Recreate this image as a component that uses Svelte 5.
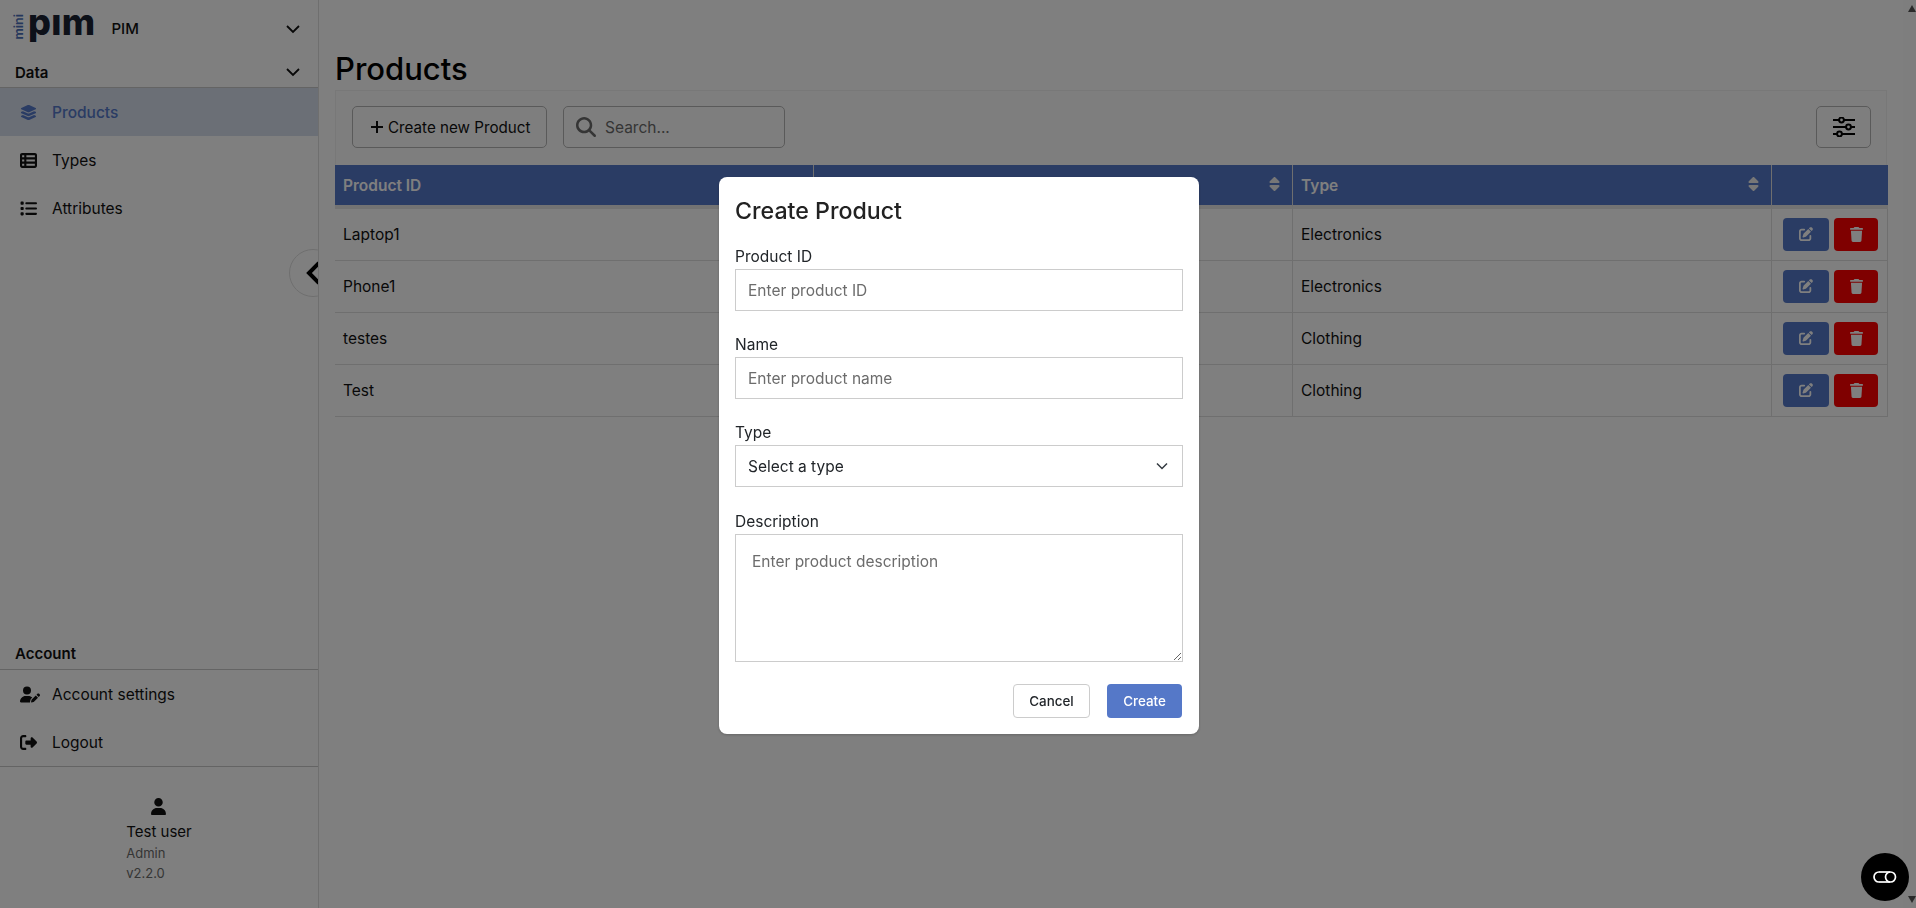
<script lang="ts">
  const products = [
    { id: 'Laptop1', name: 'Laptop', type: 'Electronics' },
    { id: 'Phone1', name: 'Phone', type: 'Electronics' },
    { id: 'testes', name: 'testes', type: 'Clothing' },
    { id: 'Test', name: 'Test', type: 'Clothing' }
  ];

  const sortIcon = 'M137.4 41.4c12.5-12.5 32.8-12.5 45.3 0l128 128c9.2 9.2 11.9 22.9 6.9 34.9s-16.6 19.8-29.6 19.8H32c-12.9 0-24.6-7.8-29.6-19.8s-2.2-25.7 6.9-34.9l128-128zm0 429.3l-128-128c-9.2-9.2-11.9-22.9-6.9-34.9s16.6-19.8 29.6-19.8H288c12.9 0 24.6 7.8 29.6 19.8s2.2 25.7-6.9 34.9l-128 128c-12.5 12.5-32.8 12.5-45.3 0z';
</script>

<div class="page">
  <aside class="sidebar">
    <div class="brand">
      <div class="logo" aria-label="mini pim">
        <span class="logo-mini">mini</span>
        <span class="logo-pim">pım</span>
      </div>
      <span class="brand-name">PIM</span>
      <svg class="chevron" width="16" height="16" viewBox="0 0 16 16" fill="none" stroke="currentColor" stroke-width="1.8"><path d="M2 5l6 6 6-6" /></svg>
    </div>

    <div class="section-title">
      <span>Data</span>
      <svg class="chevron" width="16" height="16" viewBox="0 0 16 16" fill="none" stroke="currentColor" stroke-width="1.8"><path d="M2 5l6 6 6-6" /></svg>
    </div>
    <nav>
      <div class="nav-item active">
        <svg class="nav-icon" viewBox="0 0 576 512" fill="currentColor"><path d="M264.5 5.2c14.9-6.9 32.1-6.9 47 0l218.6 101c8.5 3.9 13.9 12.4 13.9 21.8s-5.4 17.9-13.9 21.8l-218.6 101c-14.9 6.9-32.1 6.9-47 0L45.9 149.8C37.4 145.8 32 137.3 32 128s5.4-17.9 13.9-21.8L264.5 5.2zM476.9 209.6l53.2 24.6c8.5 3.9 13.9 12.4 13.9 21.8s-5.4 17.9-13.9 21.8l-218.6 101c-14.9 6.9-32.1 6.9-47 0L45.9 277.8C37.4 273.8 32 265.3 32 256s5.4-17.9 13.9-21.8l53.2-24.6 152 70.2c23.4 10.8 50.4 10.8 73.8 0l152-70.2zm-152 198.2l152-70.2 53.2 24.6c8.5 3.9 13.9 12.4 13.9 21.8s-5.4 17.9-13.9 21.8l-218.6 101c-14.9 6.9-32.1 6.9-47 0L45.9 405.8C37.4 401.8 32 393.3 32 384s5.4-17.9 13.9-21.8l53.2-24.6 152 70.2c23.4 10.8 50.4 10.8 73.8 0z" /></svg>
        <span>Products</span>
      </div>
      <div class="nav-item">
        <svg class="nav-icon" viewBox="0 0 512 512" fill="currentColor"><path d="M0 96C0 60.7 28.7 32 64 32H448c35.3 0 64 28.7 64 64V416c0 35.3-28.7 64-64 64H64c-35.3 0-64-28.7-64-64V96zm64 0v64h64V96H64zm384 0H192v64H448V96zM64 224v64h64V224H64zm384 0H192v64H448V224zM64 352v64h64V352H64zm384 0H192v64H448V352z" /></svg>
        <span>Types</span>
      </div>
      <div class="nav-item">
        <svg class="nav-icon" viewBox="0 0 512 512" fill="currentColor"><path d="M40 48C26.7 48 16 58.7 16 72v48c0 13.3 10.7 24 24 24H88c13.3 0 24-10.7 24-24V72c0-13.3-10.7-24-24-24H40zM192 64c-17.7 0-32 14.3-32 32s14.3 32 32 32H480c17.7 0 32-14.3 32-32s-14.3-32-32-32H192zm0 160c-17.7 0-32 14.3-32 32s14.3 32 32 32H480c17.7 0 32-14.3 32-32s-14.3-32-32-32H192zm0 160c-17.7 0-32 14.3-32 32s14.3 32 32 32H480c17.7 0 32-14.3 32-32s-14.3-32-32-32H192zM16 232v48c0 13.3 10.7 24 24 24H88c13.3 0 24-10.7 24-24V232c0-13.3-10.7-24-24-24H40c-13.3 0-24 10.7-24 24zM40 368c-13.3 0-24 10.7-24 24v48c0 13.3 10.7 24 24 24H88c13.3 0 24-10.7 24-24V392c0-13.3-10.7-24-24-24H40z" /></svg>
        <span>Attributes</span>
      </div>
    </nav>

    <button class="collapse" aria-label="Collapse sidebar">
      <svg width="16" height="26" viewBox="0 0 16 26" fill="none" stroke="currentColor" stroke-width="4"><path d="M14 3L4 13l10 10" /></svg>
    </button>

    <div class="account">
      <div class="section-title"><span>Account</span></div>
      <div class="nav-item">
        <svg class="nav-icon wide" viewBox="0 0 640 512" fill="currentColor"><path d="M224 256A128 128 0 1 0 224 0a128 128 0 1 0 0 256zm-45.7 48C79.8 304 0 383.8 0 482.3C0 498.7 13.3 512 29.7 512H322.8c-3.1-8.8-3.7-18.4-1.4-27.8l15-60.1c2.8-11.3 8.6-21.5 16.8-29.7l40.3-40.3c-32.1-31-75.7-50.1-123.9-50.1H178.3zm435.5-68.3c-15.6-15.6-40.9-15.6-56.6 0l-29.4 29.4 71 71 29.4-29.4c15.6-15.6 15.6-40.9 0-56.6l-14.4-14.4zM375.9 417c-4.1 4.1-7 9.2-8.4 14.9l-15 60.1c-1.4 5.5 .2 11.2 4.2 15.2s9.7 5.6 15.2 4.2l60.1-15c5.6-1.4 10.8-4.3 14.9-8.4L576.1 358.7l-71-71L375.9 417z" /></svg>
        <span>Account settings</span>
      </div>
      <div class="nav-item">
        <svg class="nav-icon" viewBox="0 0 512 512" fill="currentColor"><path d="M377.9 105.9L500.7 228.7c7.2 7.2 11.3 17.1 11.3 27.3s-4.1 20.1-11.3 27.3L377.9 406.1c-6.4 6.4-15 9.9-24 9.9c-18.7 0-33.9-15.2-33.9-33.9l0-62.1-128 0c-17.7 0-32-14.3-32-32l0-64c0-17.7 14.3-32 32-32l128 0 0-62.1c0-18.7 15.2-33.9 33.9-33.9c9 0 17.6 3.6 24 9.9zM160 96L96 96c-17.7 0-32 14.3-32 32l0 256c0 17.7 14.3 32 32 32l64 0c17.7 0 32 14.3 32 32s-14.3 32-32 32l-64 0c-53 0-96-43-96-96L0 128C0 75 43 32 96 32l64 0c17.7 0 32 14.3 32 32s-14.3 32-32 32z" /></svg>
        <span>Logout</span>
      </div>
      <div class="user">
        <div class="user-inner">
          <svg class="user-icon" viewBox="0 0 448 512" fill="currentColor"><path d="M224 256A128 128 0 1 0 224 0a128 128 0 1 0 0 256zm-45.7 48C79.8 304 0 383.8 0 482.3C0 498.7 13.3 512 29.7 512H418.3c16.4 0 29.7-13.3 29.7-29.7C448 383.8 368.2 304 269.7 304H178.3z" /></svg>
          <div class="user-name">Test user</div>
          <div class="user-meta">Admin</div>
          <div class="user-meta">v2.2.0</div>
        </div>
      </div>
    </div>
  </aside>

  <main class="main">
    <h1>Products</h1>
    <div class="toolbar">
      <div class="toolbar-left">
        <button class="btn-outline">
          <svg width="14" height="14" viewBox="0 0 14 14" fill="none" stroke="currentColor" stroke-width="2"><path d="M7 1v12M1 7h12" /></svg>
          Create new Product
        </button>
        <div class="search">
          <svg width="20" height="20" viewBox="0 0 512 512" fill="currentColor"><path d="M416 208c0 45.9-14.9 88.3-40 122.7L502.6 457.4c12.5 12.5 12.5 32.8 0 45.3s-32.8 12.5-45.3 0L330.7 376c-34.4 25.2-76.8 40-122.7 40C93.1 416 0 322.9 0 208S93.1 0 208 0S416 93.1 416 208zM208 352a144 144 0 1 0 0-288 144 144 0 1 0 0 288z" /></svg>
          <input type="text" placeholder="Search..." />
        </div>
      </div>
      <button class="btn-filter" aria-label="Filters">
        <svg width="24" height="20" viewBox="0 0 24 20" fill="none" stroke="currentColor" stroke-width="2">
          <path d="M1 3h6M12 3h11M1 10h13M19 10h4M1 17h4M10 17h13" />
          <circle cx="9.5" cy="3" r="2.4" />
          <circle cx="16.5" cy="10" r="2.4" />
          <circle cx="7.5" cy="17" r="2.4" />
        </svg>
      </button>
    </div>

    <table>
      <colgroup>
        <col class="col-data" />
        <col class="col-data" />
        <col class="col-data" />
        <col class="col-actions" />
      </colgroup>
      <thead>
        <tr>
          {#each ['Product ID', 'Name', 'Type'] as title}
            <th>
              <div class="th-inner">
                <span>{title}</span>
                <svg width="11" height="16" viewBox="0 0 320 512" fill="currentColor"><path d={sortIcon} /></svg>
              </div>
            </th>
          {/each}
          <th></th>
        </tr>
      </thead>
      <tbody>
        {#each products as p}
          <tr>
            <td>{p.id}</td>
            <td>{p.name}</td>
            <td>{p.type}</td>
            <td>
              <div class="actions">
                <button class="btn-edit" aria-label="Edit">
                  <svg width="14" height="14" viewBox="0 0 512 512" fill="currentColor"><path d="M471.6 21.7c-21.9-21.9-57.3-21.9-79.2 0L362.3 51.7l97.9 97.9 30.1-30.1c21.9-21.9 21.9-57.3 0-79.2L471.6 21.7zm-299.2 220c-6.1 6.1-10.8 13.6-13.5 21.9l-29.6 88.8c-2.9 8.6-.6 18.1 5.8 24.6s15.9 8.7 24.6 5.8l88.8-29.6c8.2-2.7 15.7-7.4 21.9-13.5L437.7 172.3 339.7 74.3 172.4 241.7zM96 64C43 64 0 107 0 160V416c0 53 43 96 96 96H352c53 0 96-43 96-96V320c0-17.7-14.3-32-32-32s-32 14.3-32 32v96c0 17.7-14.3 32-32 32H96c-17.7 0-32-14.3-32-32V160c0-17.7 14.3-32 32-32h96c17.7 0 32-14.3 32-32s-14.3-32-32-32H96z" /></svg>
                </button>
                <button class="btn-delete" aria-label="Delete">
                  <svg width="13" height="15" viewBox="0 0 448 512" fill="currentColor"><path d="M135.2 17.7L128 32H32C14.3 32 0 46.3 0 64S14.3 96 32 96H416c17.7 0 32-14.3 32-32s-14.3-32-32-32H320l-7.2-14.3C307.4 6.8 296.3 0 284.2 0H163.8c-12.1 0-23.2 6.8-28.6 17.7zM416 128H32L53.2 467c1.6 25.3 22.6 45 47.9 45H346.9c25.3 0 46.3-19.7 47.9-45L416 128z" /></svg>
                </button>
              </div>
            </td>
          </tr>
        {/each}
      </tbody>
    </table>
  </main>

  <div class="scrollbar">
    <span class="arrow-up"></span>
    <span class="arrow-down"></span>
  </div>
</div>

<div class="backdrop">
  <div class="modal">
    <h2>Create Product</h2>
    <div class="field">
      <label for="pid">Product ID</label>
      <input id="pid" type="text" placeholder="Enter product ID" />
    </div>
    <div class="field">
      <label for="pname">Name</label>
      <input id="pname" type="text" placeholder="Enter product name" />
    </div>
    <div class="field type-field">
      <label for="ptype">Type</label>
      <div class="select-wrap">
        <select id="ptype">
          <option>Select a type</option>
        </select>
        <svg width="12" height="8" viewBox="0 0 12 8" fill="none" stroke="#343a40" stroke-width="1.5"><path d="M1 1.5l5 5 5-5" /></svg>
      </div>
    </div>
    <div class="field">
      <label for="pdesc">Description</label>
      <textarea id="pdesc" placeholder="Enter product description"></textarea>
    </div>
    <div class="modal-actions">
      <button class="btn-cancel">Cancel</button>
      <button class="btn-create">Create</button>
    </div>
  </div>
</div>

<button class="chat" aria-label="Open chat">
  <svg width="26" height="14" viewBox="0 0 26 14" fill="none" stroke="#fff" stroke-width="1.7">
    <path d="M7 2a5 5 0 0 0 0 10" />
    <path d="M7 2h11" />
    <path d="M7 12h11" />
    <circle cx="18.5" cy="7" r="5" />
  </svg>
</button>

<style>
  :global(body) {
    background: #fff;
    overflow: hidden;
  }

  .page {
    display: flex;
    height: 908px;
    font-family: Inter, "Liberation Sans", sans-serif;
    font-size: 15.5px;
    color: #111;
    background: #fff;
  }

  .sidebar {
    position: relative;
    display: flex;
    flex-direction: column;
    flex: 0 0 319px;
    box-sizing: border-box;
    border-right: 1px solid #dedede;
    overflow: hidden;
  }

  .brand {
    display: flex;
    align-items: center;
    height: 52px;
    padding: 6px 17px 0 15px;
    box-sizing: border-box;
  }

  .logo {
    display: flex;
    align-items: center;
    height: 26px;
  }

  .logo-mini {
    writing-mode: vertical-rl;
    transform: rotate(180deg);
    width: 8px;
    font-size: 12.5px;
    line-height: 8px;
    font-weight: 600;
    color: #4a6fb8;
    margin-bottom: 4px;
  }

  .logo-pim {
    margin: 0 0 14px 5px;
    font-size: 36px;
    line-height: 26px;
    font-weight: 800;
    color: #1a2233;
    letter-spacing: 0.3px;
  }

  .brand-name {
    margin: 0 0 1px 16px;
    font-size: 15px;
    font-weight: 500;
  }

  .chevron {
    margin-left: auto;
  }

  .section-title {
    display: flex;
    align-items: center;
    justify-content: space-between;
    height: 36px;
    padding: 5px 17px 0 15px;
    box-sizing: border-box;
    border-bottom: 1px solid #c8c8c8;
    font-size: 15px;
    font-weight: 600;
  }

  .nav-item {
    display: flex;
    align-items: center;
    gap: 15px;
    height: 48px;
    padding-left: 20px;
    box-sizing: border-box;
  }

  .nav-item.active {
    background: #d6deed;
    color: #5578c8;
    font-weight: 500;
  }

  .nav-icon {
    flex: 0 0 17px;
    width: 17px;
    height: 17px;
  }

  .nav-icon.wide {
    flex-basis: 20px;
    width: 20px;
    margin-right: -3px;
  }

  .collapse {
    position: absolute;
    top: 249px;
    left: 289px;
    width: 48px;
    height: 48px;
    padding: 0 0 0 15px;
    display: flex;
    align-items: center;
    border: 1px solid #dedede;
    border-radius: 50%;
    background: #fff;
    color: #000;
  }

  .account {
    margin-top: auto;
  }

  .account .section-title {
    padding-top: 3px;
  }

  .user {
    display: flex;
    justify-content: center;
    height: 142px;
    border-top: 1px solid #c8c8c8;
    box-sizing: border-box;
    padding-top: 31px;
  }

  .user-icon {
    display: block;
    width: 15px;
    height: 17px;
    margin: 0 auto 6px;
  }

  .user-name {
    font-size: 15px;
    line-height: 22px;
  }

  .user-meta {
    font-size: 13px;
    line-height: 20px;
    color: #6b6b6b;
  }

  .main {
    flex: 1;
    min-width: 0;
    padding: 0 16px;
  }

  h1 {
    margin: 49px 0 1px;
    font-size: 31px;
    line-height: 40px;
    font-weight: 500;
    color: #000;
  }

  .toolbar {
    display: flex;
    align-items: center;
    justify-content: space-between;
    height: 75px;
    box-sizing: border-box;
    padding: 0 15px 2px 16px;
    border: 1px solid #f0f0f0;
    border-bottom: 0;
    background: #fdfdfd;
  }

  .toolbar-left {
    display: flex;
    gap: 16px;
  }

  .btn-outline {
    display: flex;
    align-items: center;
    gap: 4px;
    width: 195px;
    height: 42px;
    padding: 0 0 0 17px;
    border: 1px solid #b5b5b5;
    border-radius: 5px;
    background: transparent;
    font: inherit;
    font-size: 15.2px;
    color: #111;
  }

  .search {
    display: flex;
    align-items: center;
    gap: 9px;
    width: 222px;
    height: 42px;
    box-sizing: border-box;
    padding-left: 12px;
    border: 1px solid #b5b5b5;
    border-radius: 5px;
    color: #6b6b6b;
  }

  .search input {
    flex: 1;
    min-width: 0;
    border: 0;
    outline: 0;
    padding: 0;
    background: transparent;
    font: inherit;
  }

  .search input::placeholder {
    color: #6b6b6b;
  }

  .btn-filter {
    display: flex;
    align-items: center;
    justify-content: center;
    width: 55px;
    height: 42px;
    padding: 0;
    border: 1px solid #b5b5b5;
    border-radius: 5px;
    background: transparent;
    color: #000;
  }

  table {
    width: 1553px;
    table-layout: fixed;
    border-collapse: separate;
    border-spacing: 0;
  }

  .col-data {
    width: 479px;
  }

  .col-actions {
    width: 116px;
  }

  th {
    height: 44px;
    padding: 2px 8px 2px;
    box-sizing: border-box;
    background: #5578c8;
    border-bottom: 4px solid #e6e6e6;
    border-right: 1px solid #dedede;
    background-clip: padding-box;
    color: #fff;
    text-align: left;
    font-weight: 600;
    font-size: 15.5px;
  }

  th:last-child {
    border-right: 0;
  }

  .th-inner {
    display: flex;
    align-items: center;
    justify-content: space-between;
    padding-right: 4px;
  }

  .th-inner svg {
    color: #eee;
    margin-top: -3px;
  }

  td {
    height: 52px;
    padding: 0 8px 1px;
    box-sizing: border-box;
    border-bottom: 1px solid #dedede;
    border-right: 1px solid #dedede;
  }

  .actions {
    display: flex;
    justify-content: flex-end;
    gap: 5px;
    padding-right: 1px;
  }

  .actions button {
    display: flex;
    align-items: center;
    justify-content: center;
    height: 33px;
    padding: 0;
    border: 0;
    border-radius: 4px;
    color: #fff;
  }

  .btn-edit {
    width: 46px;
    background: #5578c8;
  }

  .btn-delete {
    width: 44px;
    background: #f00;
  }

  .scrollbar {
    display: flex;
    flex-direction: column;
    justify-content: space-between;
    align-items: center;
    flex: 0 0 13px;
    padding: 5px 0;
    box-sizing: border-box;
    background: #fdfdfd;
  }

  .arrow-up,
  .arrow-down {
    width: 0;
    height: 0;
    border-left: 4.5px solid transparent;
    border-right: 4.5px solid transparent;
    margin-left: 5px;
  }

  .arrow-up {
    border-bottom: 7px solid #555;
  }

  .arrow-down {
    border-top: 7px solid #555;
  }

  .backdrop {
    position: fixed;
    inset: 0;
    display: flex;
    align-items: center;
    justify-content: center;
    padding: 3px 0 0 2px;
    box-sizing: border-box;
    background: rgba(0, 0, 0, 0.5);
    font-family: Inter, "Liberation Sans", sans-serif;
    font-size: 15.5px;
    color: #212529;
  }

  .modal {
    width: 480px;
    height: 557px;
    box-sizing: border-box;
    padding: 16px;
    background: #fff;
    border-radius: 8px;
    box-shadow: 0 1px 3px rgba(0, 0, 0, 0.2);
  }

  h2 {
    margin: 0 0 16px;
    font-size: 23.2px;
    line-height: 37px;
    font-weight: 500;
    color: #222;
  }

  .field {
    margin-bottom: 23px;
  }

  .type-field {
    margin-bottom: 24px;
  }

  label {
    display: block;
    height: 23px;
    line-height: 21px;
  }

  .field input,
  .field select,
  textarea {
    display: block;
    width: 100%;
    height: 42px;
    box-sizing: border-box;
    padding: 0 12px;
    border: 1px solid #ccc;
    border-radius: 0;
    outline: 0;
    background: #fff;
    font: inherit;
    color: #212529;
  }

  .field select {
    appearance: none;
  }

  .select-wrap {
    position: relative;
  }

  .select-wrap svg {
    position: absolute;
    right: 15px;
    top: 17px;
  }

  textarea {
    height: 128px;
    padding: 17px 16px;
    resize: vertical;
  }

  ::placeholder {
    color: #6c6c6c;
    opacity: 1;
  }

  .modal-actions {
    display: flex;
    justify-content: flex-end;
    align-items: center;
    gap: 17px;
    margin-top: -1px;
  }

  .modal-actions button {
    height: 34px;
    padding: 0;
    border-radius: 4px;
    font: inherit;
    font-size: 13.4px;
    font-weight: 500;
  }

  .btn-cancel {
    width: 77px;
    height: 35px;
    border: 1px solid #ccc;
    background: #fff;
    color: #212529;
  }

  .btn-create {
    width: 75px;
    margin-right: 1px;
    border: 0;
    background: #5578c8;
    color: #fff;
  }

  .chat {
    position: fixed;
    left: 1861px;
    top: 853px;
    display: flex;
    align-items: center;
    justify-content: center;
    width: 48px;
    height: 48px;
    padding: 0;
    border: 0;
    border-radius: 50%;
    background: #000;
  }
</style>
